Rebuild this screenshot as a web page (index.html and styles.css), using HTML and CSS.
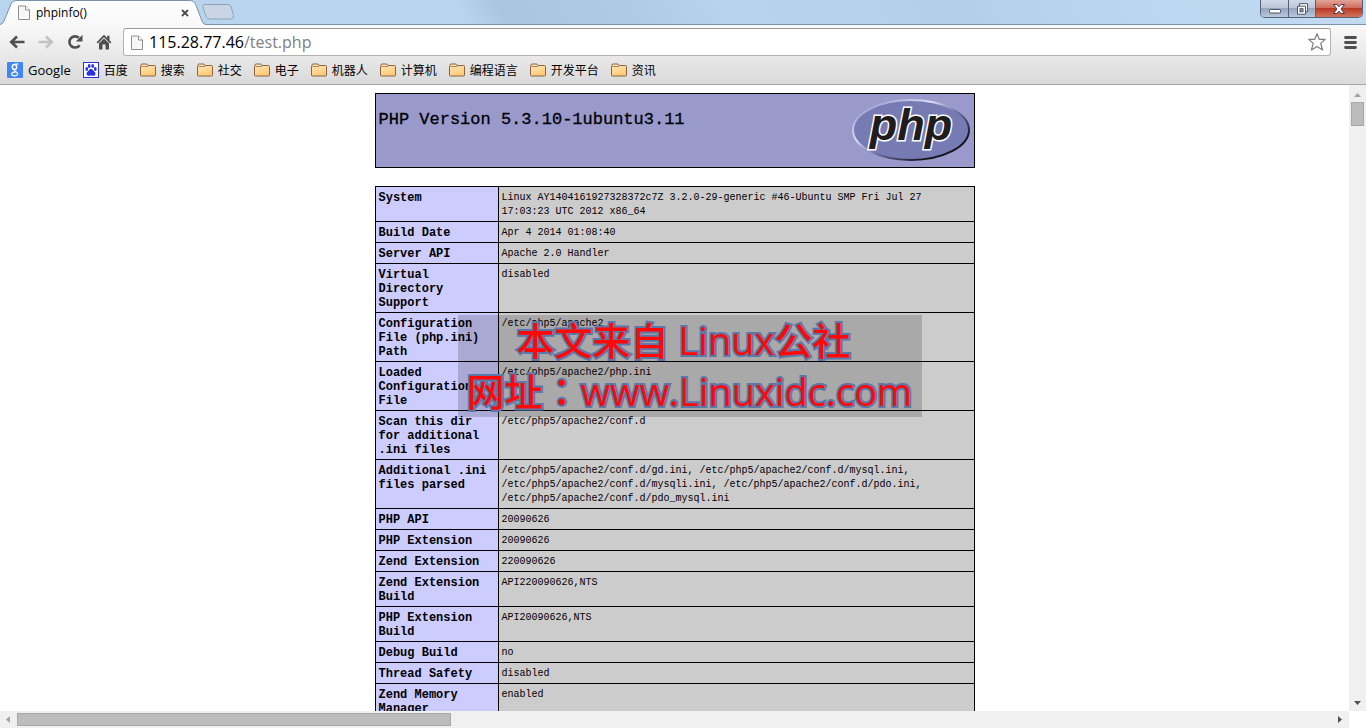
FILE: index.html
```html
<!DOCTYPE html>
<html lang="zh-CN">
<head>
<meta charset="utf-8">
<title>phpinfo()</title>
<link rel="stylesheet" href="styles.css">
</head>
<body>
<svg class="defs" width="0" height="0" aria-hidden="true">
  <defs>
    <linearGradient id="folderFill" x1="0" y1="0" x2="0.4" y2="1"><stop offset="0" stop-color="#ffe9bd"/><stop offset="1" stop-color="#ffcb78"/></linearGradient>
    <linearGradient id="tabFill" x1="0" y1="0" x2="0" y2="1"><stop offset="0" stop-color="#ffffff"/><stop offset="1" stop-color="#f8f8f8"/></linearGradient>
    <linearGradient id="rim" x1="0" y1="0" x2="1" y2="1"><stop offset="0.1" stop-color="#9c9fd2"/><stop offset="0.35" stop-color="#dfe0f4"/><stop offset="0.55" stop-color="#6d70a6"/><stop offset="0.8" stop-color="#15151d"/></linearGradient>
    <symbol id="folder" viewBox="0 0 16 16"><path d="M.5 13V4.500L1.500 2h5.500l1 1.500h6.500q1 0 1 1V13q0 1-1 1H1.500q-1 0-1-1z" fill="url(#folderFill)" stroke="#8a6344"/><path d="M1.500 4.500h6.500" stroke="#a9855f" fill="none"/></symbol>
    <symbol id="sheet" viewBox="0 0 12 15"><path d="M.5 1h7l4 4v9.500H.5z" fill="#f7f7f7" stroke="#8f8f8f"/><path d="M7.500 1v4h4" fill="#fff" stroke="#8f8f8f"/></symbol>
  </defs>
</svg>
<header class="browser">
  <div class="tabstrip">
    <div class="tab">
      <svg class="tab-shape" viewBox="0 0 206 25" aria-hidden="true"><path d="M0 24.500Q3 24 4 21L11 4Q12.500.5 16 .5H190Q194 .5 195.500 4L202 21Q203 24.500 206 24.500V25H0z" fill="url(#tabFill)"/><path d="M0 24.500Q3 24 4 21L11 4Q12.500.5 16 .5H190Q194 .5 195.500 4L202 21Q203 24.500 206 24.500" fill="none" stroke="#7d92ab"/></svg>
      <svg class="sheet" aria-hidden="true"><use href="#sheet"/></svg>
      <span class="tab-title">phpinfo()</span>
      <button class="tab-close" aria-label="Close tab"><svg viewBox="0 0 8 8"><path d="M1 1l6 6M7 1L1 7" stroke="#4c4c4c" stroke-width="1.800"/></svg></button>
    </div>
    <button class="new-tab" aria-label="New tab"><svg viewBox="0 0 32 16"><path d="M3 .5h23q2 0 3 2l2.500 9q.5 3.500-2.500 3.500H8q-3 0-4-2.500L.7 3Q.2.5 3 .5z" fill="#c9d5e4" stroke="#8fa3bb"/></svg></button>
    <div class="window-buttons">
      <button class="win min" aria-label="Minimize"><svg viewBox="0 0 14 12"><rect x="1.500" y="6.500" width="11" height="3.500" rx=".8" fill="#fff" stroke="#4b5466"/></svg></button>
      <button class="win max" aria-label="Restore"><svg viewBox="0 0 14 12"><path d="M4.500.7h8v8h-2v2.500h-8v-8h2z" fill="#fff" stroke="#4b5466"/><path d="M4.500 3.200h6v5.500" fill="none" stroke="#4b5466"/><rect x="5" y="5.700" width="3" height="3" fill="#8d9ab0" stroke="#4b5466"/></svg></button>
      <button class="win close" aria-label="Close"><svg viewBox="0 0 14 12"><path d="M1.500 1.500h3.300L7 3.700l2.200-2.200h3.300L9 6l3.500 4.500H9.200L7 8.200l-2.200 2.300H1.500L5 6z" fill="#fff" stroke="#4e3540"/></svg></button>
    </div>
  </div>
  <div class="toolbar">
    <button class="nav" aria-label="Back"><svg viewBox="0 0 16 16"><path d="M15.500 8H3M8 2.500L2.200 8 8 13.500" fill="none" stroke="#4f4f4f" stroke-width="2.600"/></svg></button>
    <button class="nav" aria-label="Forward"><svg viewBox="0 0 16 16"><path d="M.5 8h12.500M8 2.500L13.800 8 8 13.500" fill="none" stroke="#c3c3c3" stroke-width="2.600"/></svg></button>
    <button class="nav" aria-label="Reload"><svg viewBox="0 0 16 16"><path d="M12.600 11.200A5.600 5.600 0 1 1 11.800 3.800" fill="none" stroke="#4f4f4f" stroke-width="2.600"/><path d="M15.500.8v6.700H8.800z" fill="#4f4f4f"/></svg></button>
    <button class="nav" aria-label="Home"><svg viewBox="0 0 16 16"><path d="M8 .8L.6 8.200l1.200 1.200L8 3.300l6.200 6.100 1.200-1.200-1.900-2V1.700h-2.300v2.200z" fill="#4f4f4f"/><path d="M3 9.300l5-4.800 5 4.800V15.500H9.500V10.500h-3v5H3z" fill="#4f4f4f"/></svg></button>
    <div class="omnibox">
      <svg class="sheet" aria-hidden="true"><use href="#sheet"/></svg>
      <div class="url" role="textbox" aria-label="Address" contenteditable="true" spellcheck="false">115.28.77.46<span class="path">/test.php</span></div>
      <button class="star" aria-label="Bookmark this page"><svg viewBox="0 0 18 18"><path d="M9 .8l2.300 5.600h5.900l-4.500 4 1.900 6.500L9 13.400l-5.600 3.500 1.900-6.500-4.500-4h5.900z" fill="#fff" stroke="#7c7c7c" stroke-width="1.200" stroke-linejoin="round"/></svg></button>
    </div>
    <button class="menu" aria-label="Menu"><svg viewBox="0 0 13 13"><path d="M1.500 1.500h10M1.500 6.500h10M1.500 11.500h10" stroke="#4f4f4f" stroke-width="2.800" stroke-linecap="round"/></svg></button>
  </div>
  <nav class="bookmarks">
    <a class="google" href="#"><svg viewBox="0 0 16 16"><rect width="16" height="16" rx="1" fill="#4285f4"/><ellipse cx="7.500" cy="5" rx="2.200" ry="2.500" fill="none" stroke="#fff" stroke-width="1.400"/><path d="M8 2h3.500M8.500 7.500q-2 1 0 2 2.500 1.200 2 2.700-.8 2-3.500 1.600-2.800-.4-2.300-2.200.6-1.700 4-1.800" fill="none" stroke="#fff" stroke-width="1.200"/></svg>Google</a>
    <a href="#"><svg viewBox="0 0 16 16"><rect x=".5" y=".5" width="15" height="15" fill="#fff" stroke="#2932e1"/><g fill="#2932e1"><ellipse cx="3.800" cy="7" rx="1.400" ry="1.900"/><ellipse cx="6.200" cy="4" rx="1.400" ry="1.900"/><ellipse cx="9.700" cy="4" rx="1.400" ry="1.900"/><ellipse cx="12.300" cy="7" rx="1.400" ry="1.900"/><path d="M8 6.800q1.300 0 2.200 1.600l2 2.100q1 3-1.700 3.300-2.500-.5-5 0-2.700-.3-1.700-3.300l2-2.100Q6.700 6.800 8 6.800z"/></g></svg>百度</a>
    <a href="#"><svg><use href="#folder"/></svg>搜索</a>
    <a href="#"><svg><use href="#folder"/></svg>社交</a>
    <a href="#"><svg><use href="#folder"/></svg>电子</a>
    <a href="#"><svg><use href="#folder"/></svg>机器人</a>
    <a href="#"><svg><use href="#folder"/></svg>计算机</a>
    <a href="#"><svg><use href="#folder"/></svg>编程语言</a>
    <a href="#"><svg><use href="#folder"/></svg>开发平台</a>
    <a href="#"><svg><use href="#folder"/></svg>资讯</a>
  </nav>
</header>
<div class="viewport">
  <main class="page">
    <div class="info">
      <div class="banner">
        <h1>PHP Version 5.3.10-1ubuntu3.11</h1>
        <svg class="logo" viewBox="0 0 120 67" role="img" aria-label="PHP logo"><ellipse cx="60" cy="33" rx="58" ry="30" fill="#777bb4" stroke="url(#rim)" stroke-width="2"/><text class="logo-text" x="60" y="43" text-anchor="middle">php</text></svg>
      </div>
      <table>
        <tbody>
        <tr><th scope="row">System</th><td>Linux AY1404161927328372c7Z 3.2.0-29-generic #46-Ubuntu SMP Fri Jul 27 17:03:23 UTC 2012 x86_64</td></tr>
        <tr><th scope="row">Build Date</th><td>Apr 4 2014 01:08:40</td></tr>
        <tr><th scope="row">Server API</th><td>Apache 2.0 Handler</td></tr>
        <tr><th scope="row">Virtual Directory Support</th><td>disabled</td></tr>
        <tr><th scope="row">Configuration File (php.ini) Path</th><td>/etc/php5/apache2</td></tr>
        <tr><th scope="row">Loaded Configuration File</th><td>/etc/php5/apache2/php.ini</td></tr>
        <tr><th scope="row">Scan this dir for additional .ini files</th><td>/etc/php5/apache2/conf.d</td></tr>
        <tr><th scope="row">Additional .ini files parsed</th><td>/etc/php5/apache2/conf.d/gd.ini, /etc/php5/apache2/conf.d/mysql.ini, /etc/php5/apache2/conf.d/mysqli.ini, /etc/php5/apache2/conf.d/pdo.ini, /etc/php5/apache2/conf.d/pdo_mysql.ini</td></tr>
        <tr><th scope="row">PHP API</th><td>20090626</td></tr>
        <tr><th scope="row">PHP Extension</th><td>20090626</td></tr>
        <tr><th scope="row">Zend Extension</th><td>220090626</td></tr>
        <tr><th scope="row">Zend Extension Build</th><td>API220090626,NTS</td></tr>
        <tr><th scope="row">PHP Extension Build</th><td>API20090626,NTS</td></tr>
        <tr><th scope="row">Debug Build</th><td>no</td></tr>
        <tr><th scope="row">Thread Safety</th><td>disabled</td></tr>
        <tr><th scope="row">Zend Memory Manager</th><td>enabled</td></tr>
        </tbody>
      </table>
      <div class="watermark"><div class="source">本文来自 Linux公社</div><div>网址<span class="colon" lang="zh-TW">：</span>www.Linuxidc.com</div></div>
    </div>
  </main>
  <div class="vbar">
    <svg viewBox="0 0 7 4"><path d="M0 4L3.500 0 7 4z" fill="#a3a3a3"/></svg>
    <div class="vthumb"></div>
    <svg class="end" viewBox="0 0 7 4"><path d="M0 0h7L3.500 4z" fill="#505050"/></svg>
  </div>
  <div class="hbar">
    <svg viewBox="0 0 4 7"><path d="M4 0v7L0 3.500z" fill="#a3a3a3"/></svg>
    <div class="hthumb"></div>
    <svg class="end" viewBox="0 0 4 7"><path d="M0 0v7l4-3.500z" fill="#505050"/></svg>
  </div>
</div>
</body>
</html>
```
FILE: styles.css
```css
* { box-sizing: border-box; }
body {
  margin: 0;
  height: 100vh;
  display: flex;
  flex-direction: column;
  overflow: hidden;
  background: #fff;
  color: #000;
  font-family: "Open Sans", "Noto Sans CJK SC", sans-serif;
}
button { border: 0; padding: 0; background: none; display: flex; align-items: center; justify-content: center; }
svg { display: block; flex: none; }
.defs { position: absolute; }
.browser { flex: none; background: linear-gradient(#f9f9f9 25px, #dcdcdc 80px); border-bottom: 1px solid #a5a5a5; }

.tabstrip {
  display: flex;
  height: 25px;
  border-bottom: 1px solid #7d92ab;
  background: linear-gradient(58deg, #b9d4ee 0 34%, #a9c5e0 37%, #b0cbe5 47%, #b8d3ee 53%, #b3cfe9 70%, #bcd7f1 85%, #c3daf2);
}
.tab { position: relative; width: 206px; height: 25px; display: flex; align-items: center; padding: 0 16px 0 18px; }
.tab-shape { position: absolute; inset: 0; width: 206px; height: 25px; }
.tab > :not(.tab-shape) { position: relative; }
.sheet { width: 12px; height: 15px; }
.tab-title { flex: 1; margin-left: 6px; font-size: 12px; line-height: 24px; }
.tab-close { width: 10px; height: 24px; }
.tab-close svg { width: 8px; height: 8px; }
.new-tab { width: 32px; margin-left: -4px; }
.new-tab svg { width: 32px; height: 16px; }
.window-buttons { margin: 0 3px 0 auto; height: 18px; display: flex; border: 1px solid #53627a; border-top: 0; border-radius: 0 0 5px 5px; overflow: hidden; }
.win { width: 28px; height: 17px; background: linear-gradient(#d0dae7, #bbc8d9 45%, #94a5bd 50%, #b9c8dc); border-right: 1px solid #53627a; }
.win.max { width: 27px; }
.win.close { width: 46px; border: 0; background: linear-gradient(#e1a498, #cf6d5c 45%, #b93a24 50%, #d4745c); }
.win svg { width: 14px; height: 12px; }

.toolbar { display: flex; align-items: center; gap: 9px; padding: 3px 9px 0 7px; }
.nav { width: 20px; height: 27px; }
.nav svg { width: 16px; height: 16px; }
.omnibox { flex: 1; height: 28px; margin-right: 4px; display: flex; align-items: center; padding: 0 4px 0 7px; background: #fff; border: 1px solid #b3b3b3; border-top-color: #9a9a9a; border-radius: 3px; }
.url { flex: 1; margin-left: 6px; font-size: 16px; line-height: 26px; outline: 0; }
.path { color: #808080; }
.star svg { width: 18px; height: 18px; }
.menu svg { width: 13px; height: 13px; }
.bookmarks { display: flex; gap: 12px; height: 28px; align-items: center; padding: 0 0 1px 7px; font-size: 12px; }
.bookmarks a { display: flex; align-items: center; gap: 5px; color: #000; text-decoration: none; white-space: nowrap; }
.bookmarks .google { font-size: 13px; }
.bookmarks svg { width: 16px; height: 16px; }

.viewport { flex: 1; min-height: 0; display: grid; grid-template: minmax(0, 1fr) 17px / minmax(0, 1fr) 17px; }
.page { overflow: hidden; padding: 8px; }
.info { position: relative; width: 600px; margin: 0 auto; font-family: "Liberation Mono", monospace; }
.banner { display: flex; justify-content: space-between; height: 75px; padding: 3px; background: #99c; border: 1px solid #000; margin-bottom: 18px; }
.banner h1 { margin: 13px 0 0; font-size: 17px; line-height: 20px; font-weight: 400; -webkit-text-stroke: 0.3px #000; }
.logo { width: 120px; height: 67px; }
.logo-text { font: italic 700 45px "Liberation Sans", sans-serif; fill: #201c1e; stroke: #fff; stroke-width: 3px; paint-order: stroke; }
table { width: 100%; table-layout: fixed; border-collapse: collapse; line-height: 14px; }
th, td { border: 1px solid #000; padding: 4px 3px 2px; vertical-align: top; text-align: left; }
th { width: 123px; background: #ccf; font-size: 12px; }
td { background: #ccc; font-size: 10px; }
.watermark {
  position: absolute;
  left: 83px;
  top: 222px;
  width: 464px;
  height: 102px;
  padding-top: 1px;
  background: rgba(0, 0, 0, 0.17);
  color: #fe0808;
  font: 500 38px/49px "Open Sans", "Noto Sans CJK SC", sans-serif;
  text-align: center;
  white-space: nowrap;
  -webkit-text-stroke: 4px #5c78a8;
  paint-order: stroke;
}
.source { padding-right: 12px; }
.colon { font-family: "Noto Sans CJK TC", sans-serif; }

.vbar, .hbar { display: flex; align-items: center; background: #f0f0f0; }
.vbar { flex-direction: column; padding: 8px 0 6px; }
.vbar svg { width: 7px; height: 4px; }
.vthumb { width: 13px; height: 24px; margin-top: 5px; background: #bcbcbc; border: 1px solid #a8a8a8; }
.vbar .end { margin-top: auto; }
.hbar { padding: 0 7px 0 6px; }
.hbar svg { width: 4px; height: 7px; }
.hthumb { width: 32.5%; height: 13px; margin-left: 7px; background: #bcbcbc; border: 1px solid #a8a8a8; }
.hbar .end { margin-left: auto; }
```
